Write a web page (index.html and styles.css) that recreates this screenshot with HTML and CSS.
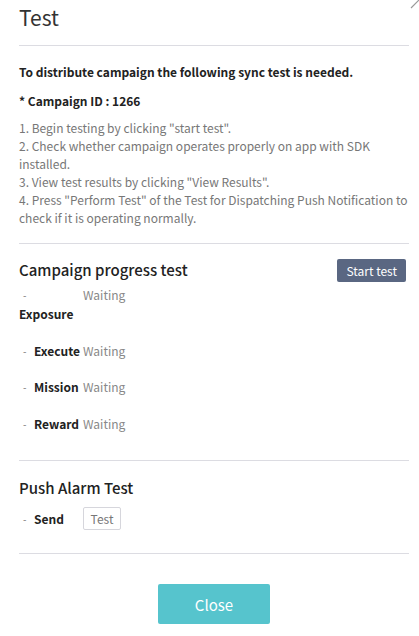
FILE: index.html
```html
<!DOCTYPE html>
<html>
<head>
<meta charset="utf-8">
<link rel="stylesheet" href="styles.css">
</head>
<body>
<div class="modal">
  <svg class="close-x" width="20" height="20" viewBox="0 0 20 20"><path d="M2 18 L18 2 M2 2 L18 18" stroke="#9a9a9a" stroke-width="1.2" fill="none"/></svg>
  <div class="head"><h1 class="title">Test</h1></div>
  <div class="intro">
    <p class="lead">To distribute campaign the following sync test is needed.</p>
    <p class="cid">* Campaign ID : 1266</p>
    <ol class="steps">
      <li>1. Begin testing by clicking "start test".</li>
      <li>2. Check whether campaign operates properly on app with SDK installed.</li>
      <li>3. View test results by clicking "View Results".</li>
      <li>4. Press "Perform Test" of the Test for Dispatching Push Notification to check if it is operating normally.</li>
    </ol>
  </div>
  <div class="section progress">
    <div class="sec-head">
      <h2 class="sec-title">Campaign progress test</h2>
      <button class="btn-start">Start test</button>
    </div>
    <div class="item first"><span class="dash">-</span><span class="label"></span><span class="status">Waiting</span></div>
    <div class="exposure">Exposure</div>
    <div class="item"><span class="dash">-</span><span class="label">Execute</span><span class="status">Waiting</span></div>
    <div class="item"><span class="dash">-</span><span class="label">Mission</span><span class="status">Waiting</span></div>
    <div class="item last"><span class="dash">-</span><span class="label">Reward</span><span class="status">Waiting</span></div>
  </div>
  <div class="section push">
    <h2 class="sec-title">Push Alarm Test</h2>
    <div class="send-row"><span class="dash">-</span><span class="label">Send</span><button class="btn-test">Test</button></div>
  </div>
  <div class="foot"><button class="btn-close">Close</button></div>
</div>
</body>
</html>
```
FILE: styles.css
```css
* { box-sizing: border-box; }
html, body { margin: 0; padding: 0; background: #fff; }
body { font-family: "Noto Sans CJK KR", "Noto Sans", sans-serif; color: #333; overflow: hidden; }
.modal { position: relative; width: 419px; height: 636px; padding: 0 10px 0 19px; }
.close-x { position: absolute; right: -10px; top: -10px; }
.head { height: 46px; border-bottom: 1px solid #dcdce2; }
.title { margin: 0; font-size: 21px; font-weight: 400; line-height: 34px; color: #333; }
.intro { padding: 17px 0 16px; border-bottom: 1px solid #dcdce2; }
.lead, .cid { margin: 0; font-size: 12px; font-weight: 700; line-height: 18px; color: #222; }
.cid { margin-top: 11px; }
.steps { list-style: none; margin: 9px 0 0; padding: 0; font-size: 12px; line-height: 18px; color: #777; }
.section { border-bottom: 1px solid #dcdce2; }
.progress { padding: 14px 3px 28px 0; }
.sec-head { display: flex; justify-content: space-between; align-items: center; height: 24px; }
.sec-title { margin: 0; font-size: 15px; font-weight: 500; line-height: 24px; color: #222; }
.btn-start { height: 23px; padding: 0 9px; border: 0; border-radius: 2px; background: #5a6782; color: #fff; font: 12px "Noto Sans CJK KR", sans-serif; }
.item { display: flex; align-items: center; height: 18px; margin-top: 18px; font-size: 12px; }
.item.first { margin-top: 3px; }
.item.last { margin-top: 19px; }
.dash { width: 15px; padding-left: 4px; color: #777; font-size: 10px; }
.label { width: 49px; font-weight: 700; color: #222; }
.status { color: #888; }
.exposure { margin-top: 2px; line-height: 18px; font-size: 12px; font-weight: 700; color: #222; }
.push { padding: 15px 0 23px; }
.send-row { display: flex; align-items: center; height: 23px; margin-top: 7px; font-size: 12px; }
.btn-test { height: 23px; width: 38px; padding: 0; border: 1px solid #d6d6dc; border-radius: 2px; background: #fff; color: #777; font: 12px "Noto Sans CJK KR", sans-serif; }
.foot { display: flex; justify-content: center; padding-top: 30px; }
.btn-close { width: 112px; height: 40px; border: 0; border-radius: 2px; background: #56c4cd; color: #fff; font: 15px "Noto Sans CJK KR", sans-serif; }
```
